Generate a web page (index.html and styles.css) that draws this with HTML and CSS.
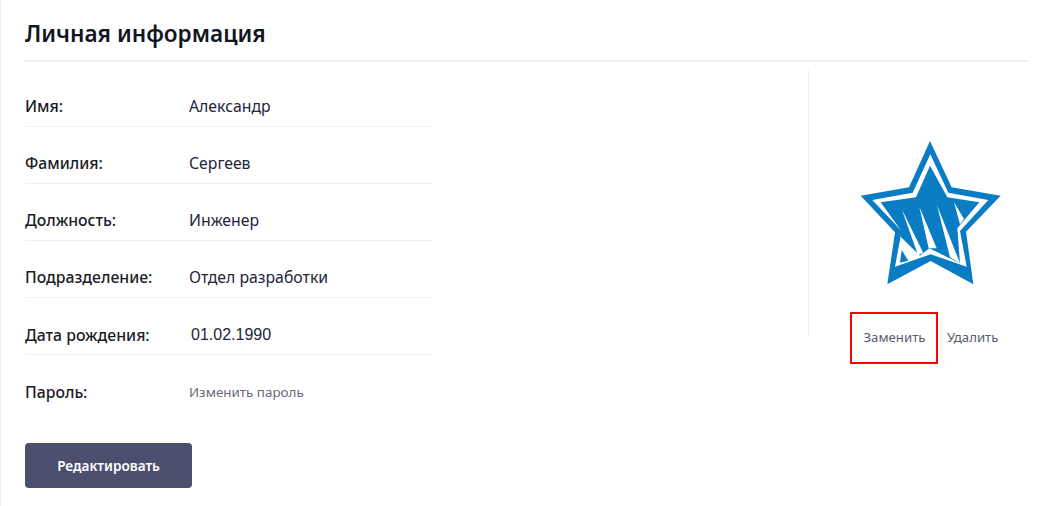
FILE: index.html
```html
<!DOCTYPE html>
<html lang="ru">
<head>
<meta charset="utf-8">
<title>Личная информация</title>
<link rel="stylesheet" href="styles.css">
</head>
<body>
<main class="page">
  <h1 class="title">Личная информация</h1>
  <div class="content">
    <section class="info">
      <div class="row"><span class="label">Имя:</span><span class="value">Александр</span></div>
      <div class="row"><span class="label">Фамилия:</span><span class="value">Сергеев</span></div>
      <div class="row"><span class="label">Должность:</span><span class="value">Инженер</span></div>
      <div class="row"><span class="label">Подразделение:</span><span class="value">Отдел разработки</span></div>
      <div class="row low"><span class="label">Дата рождения:</span><span class="value date">01.02.1990</span></div>
      <div class="row low last"><span class="label">Пароль:</span><a class="link" href="#">Изменить пароль</a></div>
      <button class="edit" type="button">Редактировать</button>
    </section>
    <aside class="avatar">
      <div class="picture">
        <svg class="star" viewBox="0 0 540 510" width="180" height="170" aria-label="Логотип">
          <polygon class="blue" points="270,48 335,187 482,212 378,320 400,478 272,408 142,478 165,322 62,212 207,187"/>
          <polygon class="white" points="271,88 325,203 445,225 360,318 380,425 272,388 165,425 185,318 97,225 218,203"/>
          <polygon class="blue" points="270,122 322,217 418,232 352,310 360,415 268,370 240,392 182,335 182,315 122,232 228,217"/>
          <polygon class="white" points="185,252 250,384 234,390"/>
          <polygon class="white" points="238,245 290,370 266,370"/>
          <polygon class="white" points="291,240 360,415 330,397"/>
          <polygon class="white" points="342,232 372,282 360,298"/>
          <polygon class="blue" points="185,375 205,407 180,413"/>
        </svg>
      </div>
      <div class="actions">
        <a class="action boxed" href="#">Заменить</a>
        <a class="action" href="#">Удалить</a>
      </div>
    </aside>
  </div>
</main>
</body>
</html>
```

FILE: styles.css
```css
* { box-sizing: border-box; }
html, body { margin: 0; height: 100%; background: #fff; }
body { font-family: "Noto Sans", "Open Sans", sans-serif; color: #14161f; }
.page {
  height: 506px;
  padding: 0 24px;
  border-left: 1px solid #f2f2f2;
  overflow: hidden;
}
.title {
  margin: 0;
  height: 62px;
  padding-top: 17px;
  font-size: 22.6px;
  line-height: 34px;
  font-weight: 600;
  letter-spacing: 0;
  border-bottom: 2px solid #eff0f6;
}
.content { display: flex; padding-top: 8px; }
.info { width: 407px; }
.row {
  display: flex;
  align-items: center;
  height: 57px;
  border-bottom: 1px solid #eff0f3;
  padding-top: 15px;
}
.row.low { padding-top: 17px; }
.row.last { border-bottom: 0; }
.label { width: 164px; font-size: 15.8px; font-weight: 500; color: #1a1c26; }
.value { font-size: 15.8px; color: #23253a; }
.date { font-family: "Liberation Sans", Arial, sans-serif; font-size: 16px; padding-left: 2px; }
.link { font-size: 13.4px; color: #6a6a78; text-decoration: none; }
.edit {
  display: block;
  width: 167px;
  height: 45px;
  margin-top: 31px;
  border: 0;
  border-radius: 4px;
  background: #4b4e6d;
  color: #fff;
  font: 600 13.6px "Noto Sans", sans-serif;
}
.avatar { margin-left: 376px; width: 220px; }
.picture {
  width: 1px;
  height: 265px;
  border-left: 1px solid #eeeeee;
  position: relative;
}
.star { position: absolute; left: 31px; top: 55px; display: block; }
.blue { fill: #0a7cc4; }
.white { fill: #fff; }
.actions { display: flex; align-items: center; margin: -23px 0 0 42px; }
.action {
  font-size: 13.2px;
  line-height: 18px;
  padding-bottom: 2px;
  color: #5a5b70;
  text-decoration: none;
}
.boxed {
  display: flex;
  align-items: center;
  justify-content: center;
  width: 88px;
  height: 52px;
  margin-right: 9px;
  padding-left: 1px;
  border: 2px solid #f00;
}
```
